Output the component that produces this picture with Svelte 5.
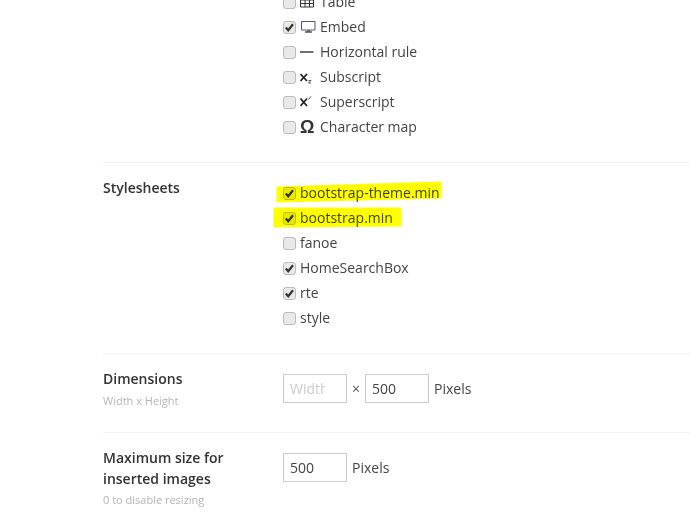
<script>
  // Icons are keyed by name so the list below stays plain data.
  const buttons = [
    { name: 'Table', icon: 'table', checked: false },
    { name: 'Embed', icon: 'embed', checked: true },
    { name: 'Horizontal rule', icon: 'rule', checked: false },
    { name: 'Subscript', icon: 'sub', checked: false },
    { name: 'Superscript', icon: 'sup', checked: false },
    { name: 'Character map', icon: 'omega', checked: false },
  ];

  const stylesheets = [
    { name: 'bootstrap-theme.min', checked: true },
    { name: 'bootstrap.min', checked: true },
    { name: 'fanoe', checked: false },
    { name: 'HomeSearchBox', checked: true },
    { name: 'rte', checked: true },
    { name: 'style', checked: false },
  ];
</script>

{#snippet box(checked)}
  <span class="box">
    {#if checked}
      <svg viewBox="0 0 11 11" width="11" height="11"><path d="M1.800 5.500l2.400 2.700L9 2.300" fill="none" stroke="#333" stroke-width="2.200" /></svg>
    {/if}
  </span>
{/snippet}

<div class="page">
  <section class="row first">
    <div class="label"></div>
    <ul class="checks">
      {#each buttons as b}
        <li>
          {@render box(b.checked)}
          <span class="icon">
            {#if b.icon === 'table'}
              <svg viewBox="0 0 14 12" width="14" height="12"><path d="M.5 1h13v10H.5zM.5 4h13M.5 7.500h13M5 1v10M9.500 1v10" fill="none" stroke="#333" /></svg>
            {:else if b.icon === 'embed'}
              <svg viewBox="0 0 16 14" width="16" height="14"><path d="M1.500 1.500h13.500v8.500H1.500z" fill="none" stroke="#556" /><path d="M5 12h7M7 11h3" stroke="#556" stroke-width="1.500" /></svg>
            {:else if b.icon === 'rule'}
              <svg viewBox="0 0 14 14" width="14" height="14"><path d="M0 7h13.500" stroke="#333" stroke-width="1.400" /></svg>
            {:else if b.icon === 'sub'}
              <svg viewBox="0 0 14 14" width="14" height="14"><path d="M.5 4l6.500 7M7 4l-6.500 7" stroke="#222" stroke-width="1.700" /><path d="M8.500 10.500h2.500L8.500 13h2.500" fill="none" stroke="#333" stroke-width=".8" /></svg>
            {:else if b.icon === 'sup'}
              <svg viewBox="0 0 14 14" width="14" height="14"><path d="M.5 3.500l6.500 7.500M7 3.500l-6.500 7.500" stroke="#222" stroke-width="1.700" /><path d="M8.500 4.500l2.500-3" fill="none" stroke="#333" stroke-width=".9" /></svg>
            {:else}
              <span class="omega">Ω</span>
            {/if}
          </span>
          <span>{b.name}</span>
        </li>
      {/each}
    </ul>
  </section>

  <section class="row sheets">
    <div class="label"><strong>Stylesheets</strong></div>
    <div class="sheet-wrap">
      <ul class="checks">
        {#each stylesheets as s}
          <li>
            {@render box(s.checked)}
            <span>{s.name}</span>
          </li>
        {/each}
      </ul>
      <!-- marker scribble laid over the first two items -->
      <svg class="marker" viewBox="0 0 172 50" width="172" height="50">
        <path d="M5 8L167 3 167 17 5 21z" fill="#ffff00" stroke="#ffff00" stroke-width="3" stroke-linejoin="round" />
        <path d="M2 29L127 29 127 45 2 46z" fill="#ffff00" stroke="#ffff00" stroke-width="3" stroke-linejoin="round" />
      </svg>
    </div>
  </section>

  <section class="row dims">
    <div class="label">
      <strong>Dimensions</strong>
      <small>Width x Height</small>
    </div>
    <div class="inputs">
      <input class="clipped" type="text" placeholder="Width" />
      <span class="times">×</span>
      <input type="text" value="500" />
      <span class="unit">Pixels</span>
    </div>
  </section>

  <section class="row maxsize">
    <div class="label">
      <strong>Maximum size for inserted images</strong>
      <small>0 to disable resizing</small>
    </div>
    <div class="inputs">
      <input type="text" value="500" />
      <span class="unit">Pixels</span>
    </div>
  </section>
</div>

<style>
  :global(body) {
    margin: 0;
    background: #fff;
    font-family: "Open Sans", sans-serif;
    font-size: 14px;
    color: #444;
    overflow: hidden;
  }

  .page {
    height: 529px;
    overflow: hidden;
    padding-left: 103px;
  }

  .row {
    display: flex;
    border-bottom: 1px solid #f3f3f3;
  }

  .row.first {
    margin-top: -11px;
    padding-bottom: 23px;
  }

  .row.sheets {
    padding: 17px 0 23px;
  }

  .row.sheets .label {
    margin-top: -2px;
  }

  .row.dims {
    padding: 20px 0 23px;
  }

  .row.dims .label {
    margin-top: -5px;
  }

  .row.dims small {
    margin-top: 4px;
  }

  .row.maxsize {
    padding: 20px 0;
    border-bottom: none;
  }

  .row.maxsize .label {
    margin-top: -6px;
  }

  .label {
    width: 180px;
    flex-shrink: 0;
  }

  strong {
    display: block;
    font-weight: 600;
    color: #333;
    line-height: 20px;
  }

  .maxsize strong {
    width: 140px;
    line-height: 21px;
  }

  small {
    display: block;
    margin-top: 3px;
    font-size: 11px;
    line-height: 16px;
    color: #b5b5b5;
  }

  .checks {
    list-style: none;
    margin: 0;
    padding: 0;
  }

  .checks li {
    display: flex;
    align-items: center;
    height: 25px;
    gap: 4px;
  }

  .sheet-wrap {
    position: relative;
  }

  .marker {
    position: absolute;
    left: -10px;
    top: 0;
    mix-blend-mode: multiply;
    pointer-events: none;
  }

  .box {
    width: 11px;
    height: 11px;
    margin-top: 2px;
    border: 1px solid #bbb;
    border-radius: 3px;
    background: #e9e9e9;
    display: flex;
    flex-shrink: 0;
  }

  .icon {
    width: 16px;
    height: 16px;
    display: flex;
    align-items: center;
    justify-content: flex-start;
  }

  .omega {
    font-family: "Liberation Sans", sans-serif;
    font-weight: 700;
    font-size: 18px;
    line-height: 16px;
    color: #333;
  }

  .inputs {
    display: flex;
    align-items: center;
    height: 29px;
  }

  input {
    width: 64px;
    height: 29px;
    box-sizing: border-box;
    border: 1px solid #ccc;
    padding: 0 6px;
    font: inherit;
    color: #444;
    background: #fff;
    outline: none;
  }

  input.clipped {
    padding-right: 21px;
  }

  input::placeholder {
    color: #ccc;
    opacity: 1;
  }

  .times {
    width: 18px;
    text-align: center;
    color: #555;
  }

  .unit {
    margin-left: 5px;
  }
</style>
